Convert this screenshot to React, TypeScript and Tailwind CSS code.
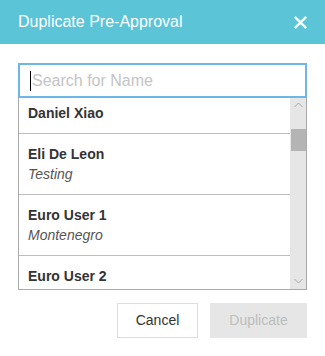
import React from "react";

const rows: { name: string; sub?: string }[] = [
  { name: "Daniel Xiao" },
  { name: "Eli De Leon", sub: "Testing" },
  { name: "Euro User 1", sub: "Montenegro" },
  { name: "Euro User 2" },
];

export default function App() {
  return (
    <div
      className="w-[325px] h-[356px] bg-white overflow-hidden"
      style={{ fontFamily: '"Liberation Sans", Arial, sans-serif' }}
    >
      <div className="h-[44px] bg-[#5bc4d7] flex items-center justify-between pl-[18px] pr-[17px]">
        <span className="text-white text-[16px] leading-none">Duplicate Pre-Approval</span>
        <svg width="15" height="15" viewBox="0 0 15 15" className="block">
          <path d="M1.8 1.8 L13.2 13.2 M13.2 1.8 L1.8 13.2" stroke="white" strokeWidth="2.4" strokeLinecap="butt" />
        </svg>
      </div>
      <div className="px-[18px] pt-[19px]">
        <div className="h-[35px] border-2 border-[#6cb6e8] flex items-center pl-[10px]">
          <span className="w-px h-[20px] bg-black mr-[1px]" />
          <span className="text-[16px] text-[#c4c4c4]">Search for Name</span>
        </div>
        <div className="h-[192px] border-l border-r border-b border-[#a9a9a9] flex overflow-hidden">
          <div className="flex-1 overflow-hidden">
            <div className="-mt-[5px]">
              {rows.map((r) => (
                <div key={r.name} className="border-b border-[#bdbdbd] pl-[9px] py-[10px] text-[14px] leading-[20px]">
                  <div className="font-bold text-[#333]">{r.name}</div>
                  {r.sub && <div className="italic text-[#555]">{r.sub}</div>}
                </div>
              ))}
            </div>
          </div>
          <div className="w-[16px] bg-[#e6e6e6] flex flex-col items-center">
            <svg width="9" height="6" viewBox="0 0 9 6" className="mt-[4px]">
              <path d="M0.5 5 L4.5 1 L8.5 5" stroke="#a6a6a6" strokeWidth="1" fill="none" />
            </svg>
            <div className="w-[15px] h-[22px] bg-[#b4b4b4] mt-[21px]" />
            <div className="flex-1" />
            <svg width="9" height="6" viewBox="0 0 9 6" className="mb-[5px]">
              <path d="M0.5 1 L4.5 5 L8.5 1" stroke="#a6a6a6" strokeWidth="1" fill="none" />
            </svg>
          </div>
        </div>
        <div className="flex justify-end gap-[12px] mt-[13px]">
          <div className="w-[81px] h-[35px] border border-[#dddddd] flex items-center justify-center text-[14px] text-[#333]">
            Cancel
          </div>
          <div className="w-[97px] h-[35px] bg-[#e6e6e6] flex items-center justify-center text-[14px] text-[#bdbdbd]">
            Duplicate
          </div>
        </div>
      </div>
    </div>
  );
}
